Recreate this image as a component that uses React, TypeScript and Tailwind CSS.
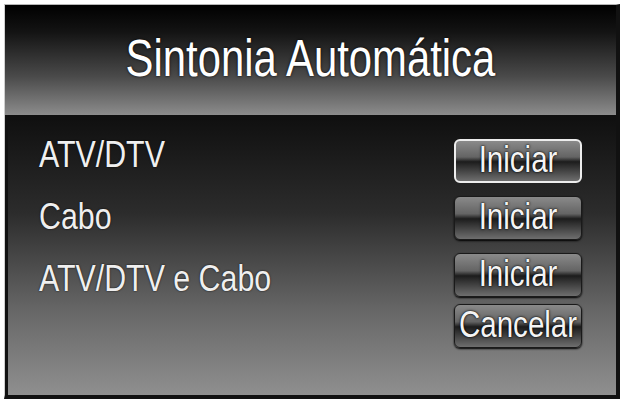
const labels = ['ATV/DTV', 'Cabo', 'ATV/DTV e Cabo']

const buttons = [
  { label: 'Iniciar', focused: true },
  { label: 'Iniciar' },
  { label: 'Iniciar' },
]

// Arial Narrow isn't installed, so Liberation Sans is squeezed horizontally instead
const narrow = 'inline-block scale-x-[0.82]'

function MenuButton({ label, focused }: { label: string; focused?: boolean }) {
  return (
    <div
      className={
        'w-[128px] h-[44px] rounded-[6px] flex items-center justify-center text-[36px] leading-none text-[#f4f4f4] ' +
        'bg-[linear-gradient(#8a8a8a_0%,#646464_40%,#1c1c1c_52%,#2e2e2e_62%,#6e6e6e_100%)] [text-shadow:0_0_3px_#000,0_0_1px_#000] ' +
        (focused ? 'border-2 border-[#ededed]' : 'border border-[#1a1a1a] shadow-[0_1px_2px_#000]')
      }
    >
      <span className={narrow + ' origin-center -mt-[2px] whitespace-nowrap'}>{label}</span>
    </div>
  )
}

export default function App() {
  return (
    <div
      className="w-[623px] h-[401px] bg-white pt-[4px] pl-[4px]"
      style={{ fontFamily: '"Liberation Sans", Arial, sans-serif' }}
    >
      <div className="w-[616px] h-[395px] border-t border-l border-t-[#b5b5b5] border-l-[#cfcfcf] border-r-[4px] border-b-[4px] border-r-[#111] border-b-[#111] flex flex-col">
        {/* Header */}
        <div className="h-[110px] flex items-center justify-center pb-1 bg-[linear-gradient(#000_0%,#141414_25%,#4a4a4a_65%,#8c8c8c_100%)]">
          <h1 className={narrow + ' origin-center text-[51px] leading-none text-white whitespace-nowrap [text-shadow:0_0_3px_#000]'}>
            Sintonia Automática
          </h1>
        </div>

        {/* Body */}
        <div className="flex-1 flex justify-between border-l-[3px] border-l-[#111] bg-[linear-gradient(#0f0f0f_0%,#2c2c2c_35%,#676767_70%,#8f8f8f_100%)] pl-[31px] pr-[34px] pt-[21px]">
          <div className="flex flex-col gap-[24px] text-[37px] leading-[38px] text-[#efefef] [text-shadow:0_0_2px_#000]">
            {labels.map(l => (
              <div key={l}>
                <span className={narrow + ' origin-left whitespace-nowrap'}>{l}</span>
              </div>
            ))}
          </div>
          <div className="flex flex-col gap-[13px] pt-[3px]">
            {buttons.map((b, i) => (
              <MenuButton key={i} label={b.label} focused={b.focused} />
            ))}
            <div className="-mt-[6px]">
              <MenuButton label="Cancelar" />
            </div>
          </div>
        </div>
      </div>
    </div>
  )
}
